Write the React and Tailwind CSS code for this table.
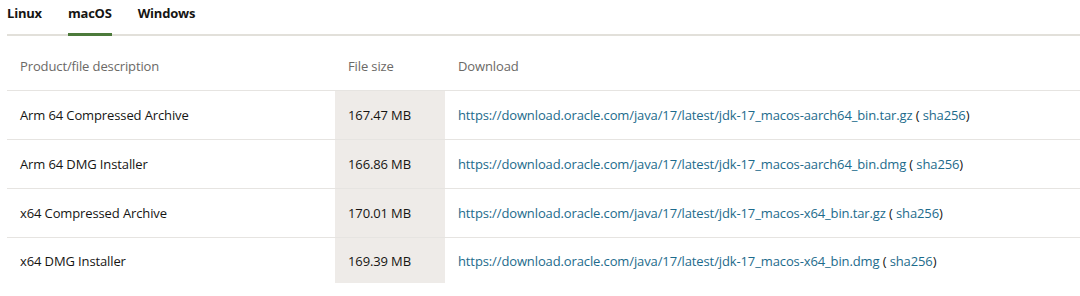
const tabs = ['Linux', 'macOS', 'Windows']

const files = [
  { name: 'Arm 64 Compressed Archive', size: '167.47 MB', url: 'https://download.oracle.com/java/17/latest/jdk-17_macos-aarch64_bin.tar.gz' },
  { name: 'Arm 64 DMG Installer', size: '166.86 MB', url: 'https://download.oracle.com/java/17/latest/jdk-17_macos-aarch64_bin.dmg' },
  { name: 'x64 Compressed Archive', size: '170.01 MB', url: 'https://download.oracle.com/java/17/latest/jdk-17_macos-x64_bin.tar.gz' },
  { name: 'x64 DMG Installer', size: '169.39 MB', url: 'https://download.oracle.com/java/17/latest/jdk-17_macos-x64_bin.dmg' },
]

export default function App() {
  return (
    <div className="w-[1080px] h-[296px] bg-white font-['Open_Sans',sans-serif] text-[13px] text-[#161513] overflow-hidden">
      {/* Tabs */}
      <div className="ml-[7px] flex gap-[26px] border-b-2 border-[#e2e0da]">
        {tabs.map(tab => (
          <div
            key={tab}
            className={`-mb-[2px] pt-[3px] pb-[10px] leading-[20px] font-bold text-[13px] tracking-[-0.2px] border-b-[3px] ${
              tab === 'macOS' ? 'border-[#4c7a3b]' : 'border-transparent'
            }`}
          >
            {tab}
          </div>
        ))}
      </div>

      {/* Table */}
      <table className="ml-[7px] w-[1073px] border-collapse tracking-[-0.12px]">
        <thead>
          <tr className="border-b border-[#e6e4e1]">
            <th className="h-[54px] w-[328px] pl-[13px] pt-[7px] text-left font-normal text-[#6b6966]">Product/file description</th>
            <th className="w-[110px] pl-[13px] pt-[7px] text-left font-normal text-[#6b6966]">File size</th>
            <th className="pl-[13px] pt-[7px] text-left font-normal text-[#6b6966]">Download</th>
          </tr>
        </thead>
        <tbody>
          {files.map((f, i) => {
            const last = i === files.length - 1
            return (
              <tr key={f.url} className={last ? '' : 'border-b border-[#e6e4e1]'}>
                <td className={`${last ? 'h-[46px]' : 'h-[49px]'} pl-[13px] pt-[2px]`}>{f.name}</td>
                <td className="pl-[13px] pt-[2px] bg-[#eeebe8]">{f.size}</td>
                <td className="pl-[13px] pt-[2px]">
                  <a href="#" className="text-[#1d6b8c]">{f.url}</a>
                  {' ( '}
                  <a href="#" className="text-[#1d6b8c]">sha256</a>
                  {')'}
                </td>
              </tr>
            )
          })}
        </tbody>
      </table>
    </div>
  )
}
